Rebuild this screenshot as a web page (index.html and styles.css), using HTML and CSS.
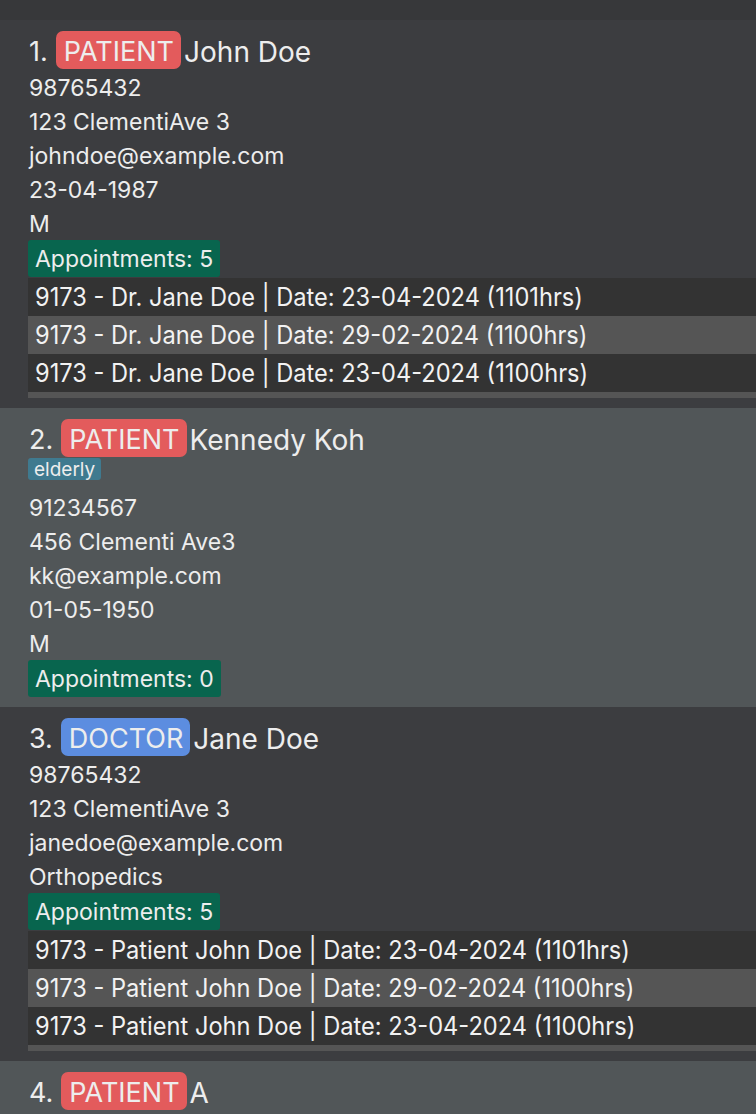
FILE: index.html
```html
<!DOCTYPE html>
<html>
<head>
<meta charset="utf-8">
<link rel="stylesheet" href="styles.css">
</head>
<body>
<div class="topbar"></div>
<div class="list">
  <div class="card odd">
    <div class="name-row"><span class="idx">1.</span><span class="role patient">PATIENT</span><span class="name">John Doe</span></div>
    <div class="line">98765432</div>
    <div class="line">123 ClementiAve 3</div>
    <div class="line">johndoe@example.com</div>
    <div class="line">23-04-1987</div>
    <div class="line">M</div>
    <div class="appt-badge">Appointments: 5</div>
    <div class="appts">
      <div class="appt"><span>9173 - Dr. Jane Doe | Date: 23-04-2024 (1101hrs)</span></div>
      <div class="appt alt"><span>9173 - Dr. Jane Doe | Date: 29-02-2024 (1100hrs)</span></div>
      <div class="appt"><span>9173 - Dr. Jane Doe | Date: 23-04-2024 (1100hrs)</span></div>
      <div class="appt-end"></div>
    </div>
  </div>
  <div class="card even">
    <div class="name-row"><span class="idx">2.</span><span class="role patient">PATIENT</span><span class="name">Kennedy Koh</span></div>
    <div class="tags"><span class="tag">elderly</span></div>
    <div class="line">91234567</div>
    <div class="line">456 Clementi Ave3</div>
    <div class="line">kk@example.com</div>
    <div class="line">01-05-1950</div>
    <div class="line">M</div>
    <div class="appt-badge">Appointments: 0</div>
  </div>
  <div class="card odd">
    <div class="name-row"><span class="idx">3.</span><span class="role doctor">DOCTOR</span><span class="name">Jane Doe</span></div>
    <div class="line">98765432</div>
    <div class="line">123 ClementiAve 3</div>
    <div class="line">janedoe@example.com</div>
    <div class="line">Orthopedics</div>
    <div class="appt-badge">Appointments: 5</div>
    <div class="appts">
      <div class="appt"><span>9173 - Patient John Doe | Date: 23-04-2024 (1101hrs)</span></div>
      <div class="appt alt"><span>9173 - Patient John Doe | Date: 29-02-2024 (1100hrs)</span></div>
      <div class="appt"><span>9173 - Patient John Doe | Date: 23-04-2024 (1100hrs)</span></div>
      <div class="appt-end"></div>
    </div>
  </div>
  <div class="card even">
    <div class="name-row"><span class="idx">4.</span><span class="role patient">PATIENT</span><span class="name">A</span></div>
  </div>
</div>
</body>
</html>
```

FILE: styles.css
```css
html, body {
  margin: 0;
  padding: 0;
  background: #37383a;
  overflow: hidden;
}
body {
  font-family: "Inter", "Open Sans", sans-serif;
  color: #ededed;
  width: 756px;
  height: 1114px;
}
.topbar {
  height: 20px;
  background: #37383a;
}
.card {
  padding: 11px 0 10px 28px;
}
.card.odd { background: #3c3d40; }
.card.even { background: #515658; }
.name-row {
  display: flex;
  align-items: center;
  height: 38px;
  margin-bottom: 1px;
  font-size: 27px;
  white-space: nowrap;
}
.idx {
  margin-left: 1px;
  margin-right: 8px;
  padding-top: 3px;
}
.role {
  height: 38px;
  line-height: 41px;
  padding: 0 7px 0 8px;
  border-radius: 7px;
  margin-right: 3px;
}
.name {
  font-size: 28px;
  padding-top: 3px;
}
.role.patient { background: #e35b5c; }
.role.doctor { background: #5c8de0; }
.line {
  height: 34px;
  line-height: 36px;
  font-size: 23px;
  padding-left: 1px;
  white-space: nowrap;
}
.tags {
  display: flex;
  height: 32px;
  align-items: flex-start;
}
.tag {
  background: #3f7a8f;
  font-size: 19px;
  height: 22px;
  line-height: 23px;
  padding: 0 6px;
  border-radius: 3px;
}
.appt-badge {
  display: inline-block;
  background: #08654e;
  font-size: 23px;
  height: 37px;
  line-height: 38px;
  padding: 0 7px;
  border-radius: 3px;
}
.appts {
  margin-top: 1px;
}
.appt {
  height: 38px;
  background: #333333;
  font-size: 25px;
  line-height: 38px;
  padding-left: 7px;
  white-space: nowrap;
  color: #f2f2f2;
}
.appt.alt { background: #555555; }
.appt span {
  display: inline-block;
  transform: scaleX(0.945);
  transform-origin: left center;
}
.appt-end {
  height: 6px;
  background: #555555;
}
```
